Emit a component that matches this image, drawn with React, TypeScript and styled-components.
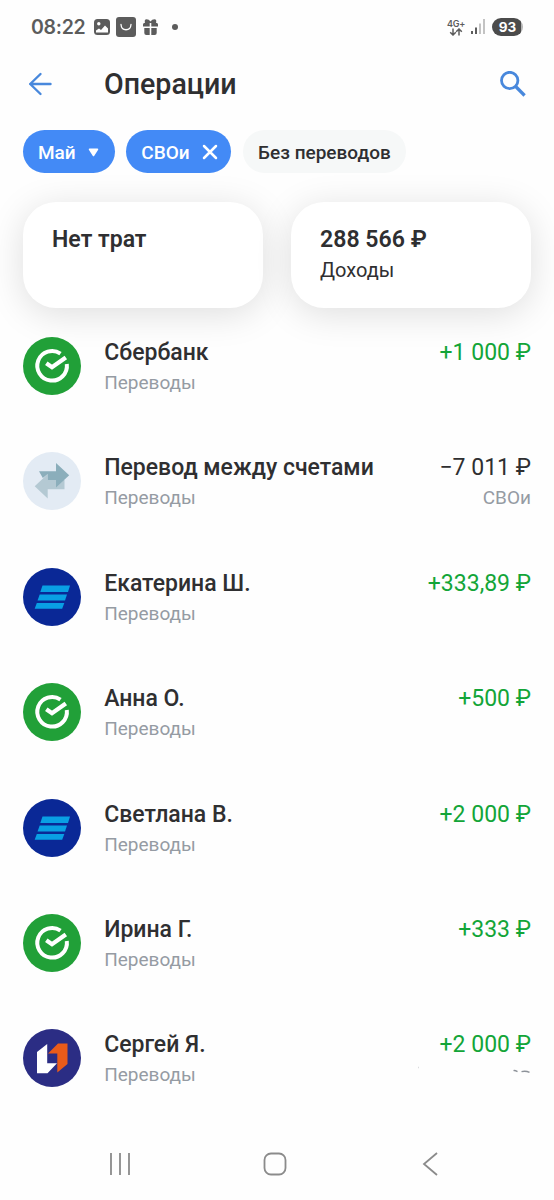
import React from "react";
import styled, { createGlobalStyle } from "styled-components";

const GlobalStyle = createGlobalStyle`
  * { box-sizing: border-box; }
  body { margin: 0; background: #fefefe; font-family: Roboto, "Liberation Sans", sans-serif; color: #2f2f31; }
  svg { display: block; flex: none; }
`;

const Screen = styled.div`
  width: 554px;
  height: 1200px;
  display: flex;
  flex-direction: column;
  overflow: hidden;
`;

const StatusBar = styled.div`
  flex: none;
  height: 54px;
  padding: 0 31px;
  display: flex;
  align-items: center;
  justify-content: space-between;
  color: #5c5c5c;
`;

const StatusGroup = styled.div`
  display: flex;
  align-items: center;
`;

const Clock = styled.span`
  font-family: Inter, Roboto, sans-serif;
  font-weight: 600;
  font-size: 19.5px;
  letter-spacing: -0.3px;
  line-height: 24px;
  width: 55px;
  margin-right: 8px;
  white-space: nowrap;
`;

const Network = styled.div`
  display: flex;
  flex-direction: column;
  align-items: center;
  width: 18px;
  margin-right: 6px;
  font-family: Inter, Roboto, sans-serif;
  font-weight: 600;
  font-size: 9px;
  line-height: 9px;
  letter-spacing: -0.3px;
  white-space: nowrap;
`;

const Battery = styled.div`
  width: 31px;
  height: 18px;
  margin-left: 7px;
  border-radius: 9px;
  background: linear-gradient(90deg, #4b4b4b 29px, #b5b5b5 29px);
  color: #fff;
  font-family: Inter, Roboto, sans-serif;
  font-weight: 700;
  font-size: 13.5px;
  line-height: 18px;
  text-align: center;
`;

const Header = styled.header`
  flex: none;
  height: 60px;
  padding: 0 28px;
  display: flex;
  align-items: center;
`;

const Title = styled.h1`
  flex: 1;
  margin: 0 0 0 52px;
  font-size: 28.6px;
  line-height: 36px;
  font-weight: 500;
`;

const Chips = styled.div`
  flex: none;
  margin-top: 16px;
  padding-left: 23px;
  display: flex;
  gap: 11.8px;
  position: relative;
  z-index: 1;
`;

const Chip = styled.button<{ $active?: boolean; $width: number }>`
  width: ${(p) => p.$width}px;
  height: 43px;
  padding: 2px 0 0 15px;
  border: 0;
  border-radius: 22px;
  display: flex;
  align-items: center;
  background: ${(p) => (p.$active ? "#438af6" : "#f6f8f8")};
  color: ${(p) => (p.$active ? "#fff" : "#2f2f31")};
  font: 500 19px/24px Roboto, sans-serif;
  white-space: nowrap;
  svg { margin: -1px 0 0 12px; }
`;

const Cards = styled.div`
  flex: none;
  margin-top: 29px;
  padding: 0 23px;
  display: grid;
  grid-template-columns: 1fr 1fr;
  gap: 28px;
`;

const Card = styled.div`
  height: 105.5px;
  padding: 24px 29px;
  border-radius: 33px;
  background: #fff;
  box-shadow: 0 6px 36px rgba(0, 0, 0, 0.13);
`;

const CardValue = styled.div`
  font-size: 23.1px;
  line-height: 28px;
  font-weight: 600;
`;

const CardLabel = styled.div`
  margin-top: 3.5px;
  font-size: 20px;
  line-height: 24px;
`;

const List = styled.main`
  flex: 1;
  min-height: 0;
  padding: 29.5px 23px 0;
  position: relative;
`;

const Row = styled.div`
  height: 115.4px;
  display: grid;
  grid-template-columns: 58px 1fr auto;
  column-gap: 23.2px;
  align-items: start;
`;

const Lines = styled.div<{ $end?: boolean }>`
  padding-top: 2px;
  text-align: ${(p) => (p.$end ? "right" : "left")};
  white-space: nowrap;
`;

const Name = styled.div`
  font-size: 23px;
  line-height: 28px;
  font-weight: 500;
`;

const Amount = styled.div<{ $income?: boolean }>`
  font-size: 23px;
  line-height: 28px;
  color: ${(p) => (p.$income ? "#13a538" : "#2f2f31")};
`;

const Note = styled.div`
  margin-top: 4px;
  font-size: 19px;
  line-height: 24px;
  color: #959ba3;
`;

const Clipped = styled.div`
  margin-top: 3px;
  display: flex;
  justify-content: flex-end;
`;

const NavBar = styled.nav`
  flex: none;
  height: 72px;
  padding: 0 113px 0 109px;
  display: grid;
  grid-template-columns: 22px 1fr 22px;
  justify-items: center;
  align-items: center;
`;

type Bank = "sber" | "swap" | "vtb" | "psb";

function BankLogo({ bank }: { bank: Bank }) {
  return (
    <svg width="58" height="58" viewBox="0 0 58 58">
      {bank === "sber" && (
        <>
          <circle cx="29" cy="29" r="29" fill="#21a038" />
          <path d="M37.5 16.6A14.8 14.8 0 1 0 43.8 27" fill="none" stroke="#fff" strokeWidth="4" />
          <path d="M23.3 26.2L29 30.2L42.8 20.4" fill="none" stroke="#fff" strokeWidth="4.3" />
        </>
      )}
      {bank === "swap" && (
        <>
          <circle cx="29" cy="29" r="29" fill="#e3ebf4" />
          <path d="M11.7 34.2L24.7 22V28H41.5V37.3H24.7V46.5Z" fill="#b4c9d3" />
          <path d="M16 19.3H33V11L46.2 23.2L33 35.4V28H24.7V22L19.8 26Z" fill="#8baebb" />
        </>
      )}
      {bank === "vtb" && (
        <>
          <circle cx="29" cy="29" r="29" fill="#0a2896" />
          <g fill="#099fe4">
            <path d="M19.5 17.5H47L45 24H17.3Z" />
            <path d="M16.7 26.5H44L42 32.5H14.5Z" />
            <path d="M13.8 35H41.3L39.2 40.7H11.7Z" />
          </g>
        </>
      )}
      {bank === "psb" && (
        <>
          <circle cx="29" cy="29" r="29" fill="#2b2d84" />
          <path d="M14 44.3V23L24.2 15V34.3H34L24.5 44.3Z" fill="#fff" />
          <path d="M25 24.5L35 14.5H44.5V35L34.3 43.5V24.5Z" fill="#ea5b1a" />
        </>
      )}
    </svg>
  );
}

interface Operation {
  bank: Bank;
  name: string;
  amount: string;
  income?: boolean;
  account?: string;
  clipped?: boolean;
}

const operations: Operation[] = [
  { bank: "sber", name: "Сбербанк", amount: "+1 000 ₽", income: true },
  { bank: "swap", name: "Перевод между счетами", amount: "−7 011 ₽", account: "СВОи" },
  { bank: "vtb", name: "Екатерина Ш.", amount: "+333,89 ₽", income: true },
  { bank: "sber", name: "Анна О.", amount: "+500 ₽", income: true },
  { bank: "vtb", name: "Светлана В.", amount: "+2 000 ₽", income: true },
  { bank: "sber", name: "Ирина Г.", amount: "+333 ₽", income: true },
  { bank: "psb", name: "Сергей Я.", amount: "+2 000 ₽", income: true, clipped: true },
];

export default function App() {
  return (
    <>
      <GlobalStyle />
      <Screen>
        <StatusBar>
          <StatusGroup>
            <Clock>08:22</Clock>
            <svg width="86" height="20" viewBox="0 0 86 20">
              <rect x="0" y="2" width="16" height="16" rx="3.5" fill="#5c5c5c" />
              <circle cx="4.8" cy="6.8" r="1.7" fill="#fff" />
              <path d="M2 15.5V13.5L5 11.5L7 13L11 8.5L14 11.5V15.5Z" fill="#fff" />
              <rect x="22" y="0" width="20" height="20" rx="3" fill="#5c5c5c" />
              <path d="M27 7.5C27.5 14.5 36.5 14.5 37 7.5" fill="none" stroke="#fff" strokeWidth="1.3" strokeLinecap="round" />
              <g fill="#5c5c5c">
                <path d="M49 7.5Q49 5.8 51 5.8Q50 2.5 52.5 2.3Q55 2.3 56.5 4.5Q58 2.3 60.5 2.3Q63 2.5 62 5.8Q64 5.8 64 7.5V9.5H57.3V6H55.7V9.5H49Z" />
                <path d="M50.3 11H55.7V18H52.3Q50.3 18 50.3 16ZM57.3 11H62.7V16Q62.7 18 60.7 18H57.3Z" />
                <circle cx="81" cy="10" r="3" />
              </g>
            </svg>
          </StatusGroup>
          <StatusGroup>
            <Network>
              4G+
              <svg width="14" height="8" viewBox="0 0 14 8" fill="none" stroke="#5c5c5c" strokeWidth="1.5">
                <path d="M4 .5V7M1.2 4.2L4 7L6.8 4.2M10 7.5V1M7.2 3.8L10 1L12.8 3.8" />
              </svg>
            </Network>
            <svg width="14" height="16" viewBox="0 0 14 16">
              <path d="M0 12H2V15H0ZM4 8.5H6V15H4Z" fill="#5c5c5c" />
              <path d="M8 4.5H10V15H8ZM12 0H14V15H12Z" fill="#c3c3c3" />
            </svg>
            <Battery>93</Battery>
          </StatusGroup>
        </StatusBar>

        <Header>
          <svg width="24" height="24" viewBox="0 0 24 24" fill="none" stroke="#4888dc" strokeWidth="2.4" strokeLinecap="round" strokeLinejoin="round">
            <path d="M22.5 12H2.2M12.5 2L2.2 12L12.5 22" />
          </svg>
          <Title>Операции</Title>
          <svg width="26" height="26" viewBox="0 0 26 26" fill="none" stroke="#4888dc">
            <circle cx="9.7" cy="9.5" r="8.2" strokeWidth="2.8" />
            <path d="M15.7 15.5L24.6 24.5" strokeWidth="3.2" />
          </svg>
        </Header>

        <Chips>
          <Chip $active $width={91.5}>
            Май
            <svg width="11" height="9" viewBox="0 0 11 9" fill="#fff">
              <path d="M1.5 .5H9.5Q10.9 .7 10 2L6.3 7.8Q5.5 8.8 4.7 7.8L1 2Q.1 .7 1.5 .5Z" />
            </svg>
          </Chip>
          <Chip $active $width={105}>
            СВОи
            <svg width="16" height="16" viewBox="0 0 16 16" fill="none" stroke="#fff" strokeWidth="2.5" strokeLinecap="round">
              <path d="M2 2L14 14M14 2L2 14" />
            </svg>
          </Chip>
          <Chip $width={163}>Без переводов</Chip>
        </Chips>

        <Cards>
          <Card>
            <CardValue>Нет трат</CardValue>
          </Card>
          <Card>
            <CardValue>288 566 ₽</CardValue>
            <CardLabel>Доходы</CardLabel>
          </Card>
        </Cards>

        <List>
          {operations.map((op) => (
            <Row key={op.name}>
              <BankLogo bank={op.bank} />
              <Lines>
                <Name>{op.name}</Name>
                <Note>Переводы</Note>
              </Lines>
              <Lines $end>
                <Amount $income={op.income}>{op.amount}</Amount>
                {op.account && <Note>{op.account}</Note>}
                {op.clipped && (
                  <Clipped>
                    <svg width="114" height="12" viewBox="0 0 114 12" fill="none" stroke="#8d9299" strokeWidth="1.4">
                      <path d="M96.5 8.6Q98 8.2 100.5 9.6M104.5 9.6Q109 8.6 112.5 10.4" />
                      <path d="M1 5.5H2" stroke="#dadcdf" />
                    </svg>
                  </Clipped>
                )}
              </Lines>
            </Row>
          ))}
        </List>

        <NavBar>
          <svg width="22" height="22" viewBox="0 0 22 22" stroke="#8b8b8b" strokeWidth="1.8">
            <path d="M2 0V22M11 0V22M20 0V22" />
          </svg>
          <svg width="24" height="24" viewBox="0 0 24 24" fill="none" stroke="#8b8b8b" strokeWidth="1.8">
            <rect x="1.5" y="1.5" width="21" height="21" rx="6.5" />
          </svg>
          <svg width="22" height="24" viewBox="0 0 22 24" fill="none" stroke="#8b8b8b" strokeWidth="1.8">
            <path d="M18 1L5 12L18 23" />
          </svg>
        </NavBar>
      </Screen>
    </>
  );
}
